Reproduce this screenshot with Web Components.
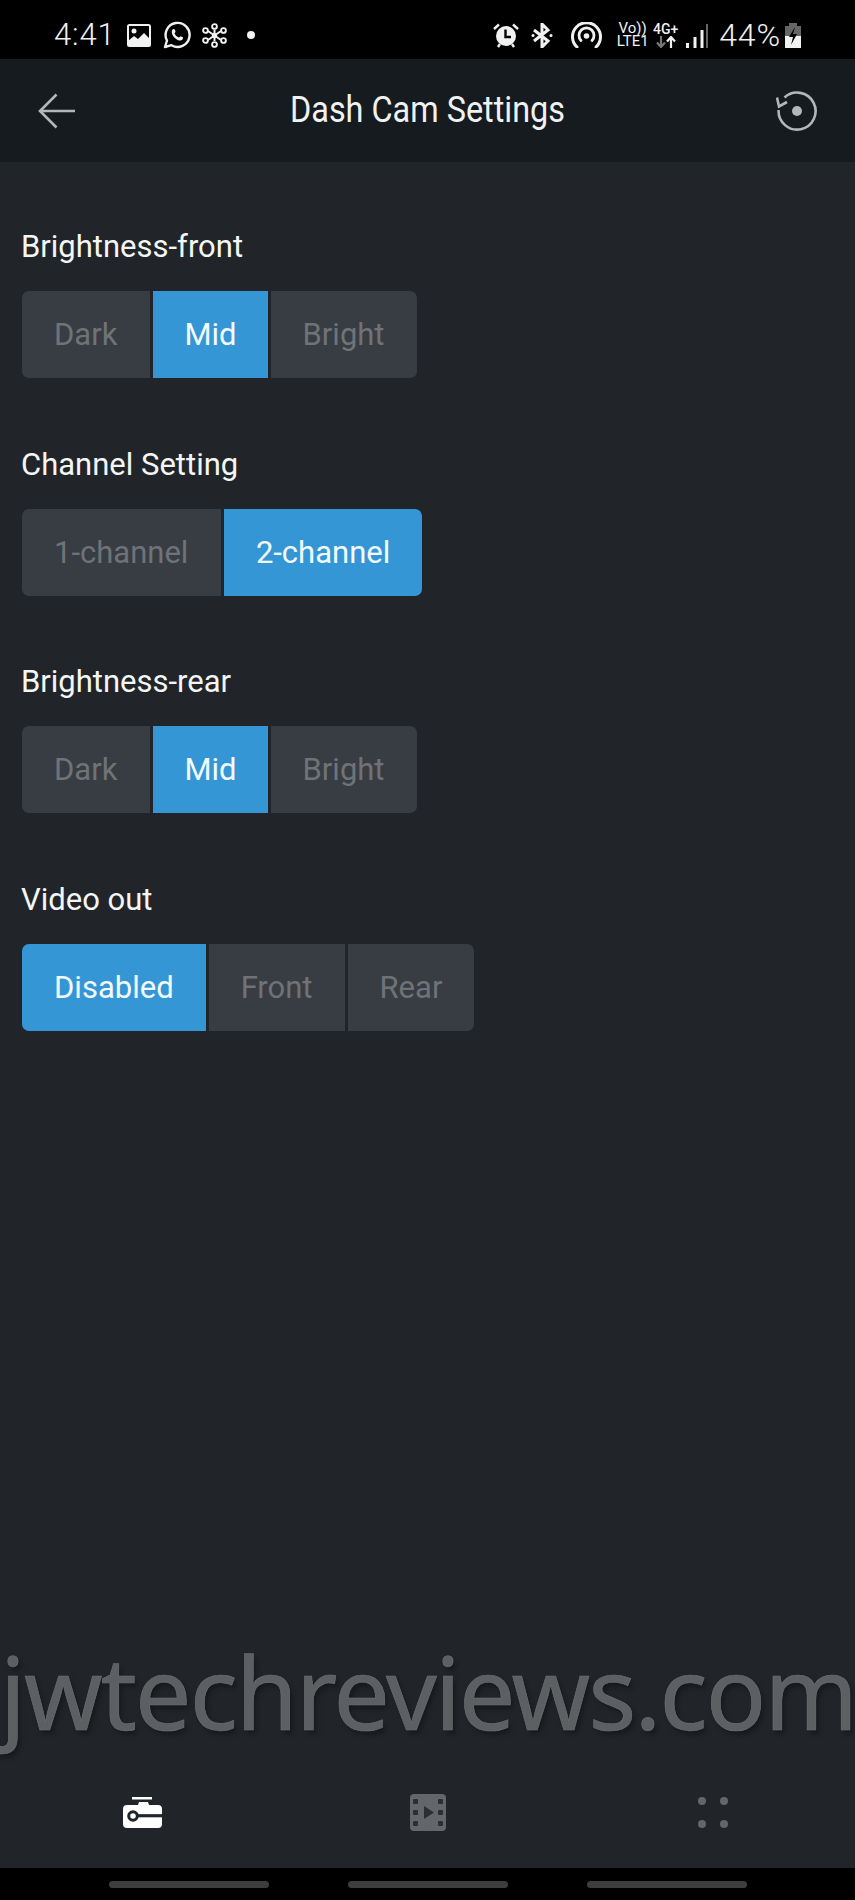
<!DOCTYPE html>
<html><head><meta charset="utf-8"><title>Dash Cam Settings</title>
<style>
html,body{margin:0;padding:0;background:#212529}
body{width:855px;height:1900px;overflow:hidden;font-family:Roboto,"Liberation Sans",sans-serif}
</style></head><body>
<dash-app>
  <status-bar slot="top"></status-bar>
  <app-header slot="top" title="Dash Cam Settings"></app-header>
  <setting-group label="Brightness-front"><seg-option style="padding-right:33px">Dark</seg-option><seg-option selected style="padding:0 31px">Mid</seg-option><seg-option>Bright</seg-option></setting-group>
  <setting-group label="Channel Setting"><seg-option style="padding-right:33px">1-channel</seg-option><seg-option selected style="padding:0 31.500px">2-channel</seg-option></setting-group>
  <setting-group label="Brightness-rear"><seg-option style="padding-right:33px">Dark</seg-option><seg-option selected style="padding:0 31px">Mid</seg-option><seg-option>Bright</seg-option></setting-group>
  <setting-group label="Video out"><seg-option selected>Disabled</seg-option><seg-option>Front</seg-option><seg-option>Rear</seg-option></setting-group>
  <water-mark slot="over">jwtechreviews.com</water-mark>
  <tab-bar slot="bottom"></tab-bar>
  <nav-bar slot="bottom"></nav-bar>
</dash-app>
<script>
function def(name, html, init){
  customElements.define(name, class extends HTMLElement{
    constructor(){super();this.attachShadow({mode:'open'}).innerHTML=typeof html==='function'?html(this):html;}
    connectedCallback(){
      if(init)init(this);
    }
  });
}
def('dash-app',`<style>
:host{display:flex;flex-direction:column;width:855px;height:1900px;position:relative;background:#212529;color:#fff}
main{flex:1;padding:67px 22px 0;display:flex;flex-direction:column;gap:68.600px;align-items:flex-start}
</style><slot name="top"></slot><main><slot></slot></main><slot name="over"></slot><slot name="bottom"></slot>`);

def('status-bar',`<style>
:host{display:flex;align-items:center;height:59px;background:#000;color:#f1f1f1;padding:11px 54px 0;box-sizing:border-box;font-family:Roboto,sans-serif}
.t{font-size:31px;font-weight:300;line-height:48px;letter-spacing:.9px}
svg{display:block;flex:none}
.sp{flex:1}
.net{display:flex;flex-direction:column;align-items:center;font-size:15px;line-height:13px;margin-left:15px;width:31px;font-weight:400}
.net.b{margin-left:5px;width:25px;font-size:14px;font-weight:500}
.net span{display:block;white-space:nowrap}
</style>
<span class="t">4:41</span>
<svg style="margin-left:11px" width="24" height="23" viewBox="0 0 24 23"><rect x="1" y="1" width="22" height="21" rx="1.5" fill="none" stroke="#f1f1f1" stroke-width="2"/><circle cx="7" cy="7" r="2.5" fill="#f1f1f1"/><path d="M1 22V17L7 12L11 15L17 9L23 15V22Z" fill="#f1f1f1"/></svg>
<svg style="margin-left:12px" width="28" height="28" viewBox="0 0 28 28"><path d="M2 26L4 19.500A12 12 0 1 1 8.500 24.200Z" fill="none" stroke="#f1f1f1" stroke-width="2.400" stroke-linejoin="round"/><path d="M9.500 8.500C10.500 7.500 11.500 7.800 12 9L12.500 10.500C12.700 11.200 11.500 12 11.500 12.500C12.500 14.500 14 15.700 15.800 16.500C16.400 16.500 17 15.200 17.700 15.200L19.800 16.300C20.300 16.700 20 18 19.300 18.800C17.800 20.300 14.500 19.500 11.800 17C9 14.300 8 10.500 9.500 8.500Z" fill="#f1f1f1"/></svg>
<svg style="margin-left:11px" width="25" height="25" viewBox="0 0 25 25" fill="none" stroke="#f1f1f1" stroke-width="1.900"><path d="M12.500 7V18M6 8L19 17M19 8L6 17" stroke-width="2"/><circle cx="12.500" cy="12.500" r="2.600" fill="#f1f1f1" stroke="none"/><circle cx="12.500" cy="3.500" r="2.400" fill="#000"/><circle cx="12.500" cy="21.500" r="2.400" fill="#000"/><circle cx="3.500" cy="7.500" r="2.400" fill="#000"/><circle cx="21.500" cy="7.500" r="2.400" fill="#000"/><circle cx="3.500" cy="17.500" r="2.400" fill="#000"/><circle cx="21.500" cy="17.500" r="2.400" fill="#000"/></svg>
<svg style="margin-left:20px" width="8" height="8" viewBox="0 0 8 8"><circle cx="4" cy="4" r="4" fill="#f1f1f1"/></svg>
<span class="sp"></span>
<svg width="26" height="25" viewBox="0 0 26 25"><path d="M1 6L6 1.500M25 6L20 1.500M5 24L7 21M21 24L19 21" stroke="#f1f1f1" stroke-width="2.400" fill="none"/><circle cx="13" cy="13" r="10" fill="#f1f1f1"/><path d="M12.500 6.500V14H18" stroke="#000" stroke-width="2.400" fill="none"/></svg>
<svg style="margin-left:12px" width="22" height="25" viewBox="0 0 22 25"><path d="M3 7L17 18L11 24V1L17 7L3 18" fill="none" stroke="#f1f1f1" stroke-width="3"/><circle cx="2" cy="12.500" r="1.500" fill="#f1f1f1"/><circle cx="20" cy="12.500" r="1.500" fill="#f1f1f1"/></svg>
<svg style="margin-left:18px" width="31" height="26" viewBox="0 0 31 26" fill="none" stroke="#f1f1f1" stroke-width="3" stroke-linecap="round"><path d="M6 25A14 14 0 1 1 25 25"/><path d="M10 18.500A7.500 7.500 0 1 1 21 18.500" stroke-width="2.800"/><circle cx="15.500" cy="14" r="2.800" fill="#f1f1f1" stroke="none"/></svg>
<div class="net"><span>Vo))</span><span>LTE1</span></div>
<div class="net b"><span>4G+</span><svg width="20" height="12" viewBox="0 0 20 12" fill="none" stroke-width="2.200"><path d="M5 0V10M1 6.500L5 11L9 6.500" stroke="#777"/><path d="M15 12V2M11 5.500L15 1L19 5.500" stroke="#f1f1f1"/></svg></div>
<svg style="margin-left:8px" width="22" height="25" viewBox="0 0 22 25"><rect x="0" y="20" width="3" height="5" fill="#f1f1f1"/><rect x="7.500" y="14" width="3" height="11" fill="#f1f1f1"/><rect x="14.500" y="7" width="3" height="18" fill="#f1f1f1"/><rect x="20" y="1" width="2" height="24" fill="#666"/></svg>
<span class="t" style="margin-left:11px;font-size:32px">44%</span>
<svg style="margin-left:4px;margin-right:0" width="16" height="25" viewBox="0 0 16 25"><rect x="4" y="0" width="8" height="3" fill="#666"/><rect x="0" y="3" width="16" height="10" fill="#666"/><rect x="0" y="13" width="16" height="12" fill="#f1f1f1"/><path d="M10 4L4 14H8L6 22L12 11H8Z" fill="#000"/></svg>`);

def('app-header',(el)=>`<style>
:host{display:flex;align-items:center;justify-content:space-between;height:103px;background:#161b20;padding:0 37px 0 38px;box-sizing:border-box;position:relative}
h1{margin:0;font:400 36px/105px Roboto,sans-serif;color:#f0f2f2;transform:scaleX(.9);white-space:nowrap;position:absolute;left:0;right:0;text-align:center;pointer-events:none}
svg{display:block}
</style>
<svg width="38" height="36" viewBox="0 0 38 36" fill="none" stroke="#b4b6b7" stroke-width="2.600"><path d="M37 18H2M18.500 1.500L2 18L18.500 34.500"/></svg>
<h1>Dash Cam Settings</h1>
<svg width="42" height="42" viewBox="0 0 42 42" fill="none" stroke="#b4b6b7" stroke-width="2.600"><path d="M8.500 7.500A18.500 18.500 0 1 1 2.600 20"/><path d="M1 7.500L3 16.500L11 12"/><circle cx="21" cy="21" r="5" fill="#b4b6b7" stroke="none"/></svg>`);

def('setting-group',(el)=>`<style>
:host{display:block}
label{display:block;font:400 31px/36px Roboto,sans-serif;color:#f4f6f6;margin:0 0 26px -1px}
.seg{display:inline-flex;gap:3px;height:87px;border-radius:7px;overflow:hidden}
</style><label></label><div class="seg"><slot></slot></div>`,(el)=>{
  el.shadowRoot.querySelector('label').textContent=el.getAttribute('label');
});

def('seg-option',`<style>
:host{display:flex;align-items:center;justify-content:center;height:87px;padding:0 32px;background:#383d43;color:#6f7377;font:400 31px Roboto,sans-serif;white-space:nowrap}
:host([selected]){background:#3596d6;color:#f2fbff}
</style><slot></slot>`);

def('water-mark',`<style>
:host{position:absolute;left:0;top:1631px;width:855px;display:block;overflow:visible;font:400 100px/120px "Noto Sans",sans-serif;color:#5c6063;-webkit-text-stroke:.6px #6f7275;text-shadow:3px 4px 5px rgba(0,0,0,.3);white-space:nowrap;letter-spacing:-1.800px}
</style><slot></slot>`);

def('tab-bar',`<style>
:host{display:grid;grid-template-columns:repeat(3,1fr);height:118px;align-items:center;justify-items:center;padding:6px 0 0;box-sizing:border-box}
svg{display:block}
</style>
<svg width="39" height="31" viewBox="0 0 39 31"><rect x="9" y="0" width="20" height="2.500" fill="#fff"/><path d="M16 5H25L26 8H35Q39 8 39 12V17.500H15V20H39V27Q39 31 35 31H4Q0 31 0 27V12Q0 8 4 8H15Z" fill="#fff"/><circle cx="10" cy="19" r="4.300" fill="none" stroke="#212529" stroke-width="3"/><path d="M14 18.800H39" stroke="#212529" stroke-width="3"/></svg>
<svg width="36" height="37" viewBox="0 0 36 37"><rect width="36" height="37" rx="4" fill="#63676b"/><g fill="#2b2f33"><rect x="3" y="5" width="5" height="5" rx="1"/><rect x="3" y="16" width="5" height="5" rx="1"/><rect x="3" y="27" width="5" height="5" rx="1"/><rect x="28" y="5" width="5" height="5" rx="1"/><rect x="28" y="16" width="5" height="5" rx="1"/><rect x="28" y="27" width="5" height="5" rx="1"/><path d="M14 12L24 18.500L14 25Z"/></g></svg>
<svg width="30" height="31" viewBox="0 0 30 31" fill="#63676b"><circle cx="4" cy="4" r="4"/><circle cx="26" cy="4" r="4"/><circle cx="4" cy="27" r="4"/><circle cx="26" cy="27" r="4"/></svg>`);

def('nav-bar',`<style>
:host{display:flex;justify-content:center;gap:79px;height:32px;background:#000;padding-top:13px;box-sizing:border-box}
i{display:block;width:160px;height:7px;border-radius:4px;background:#3d3d3d}
</style><i></i><i></i><i></i>`);
</script>
</body></html>
